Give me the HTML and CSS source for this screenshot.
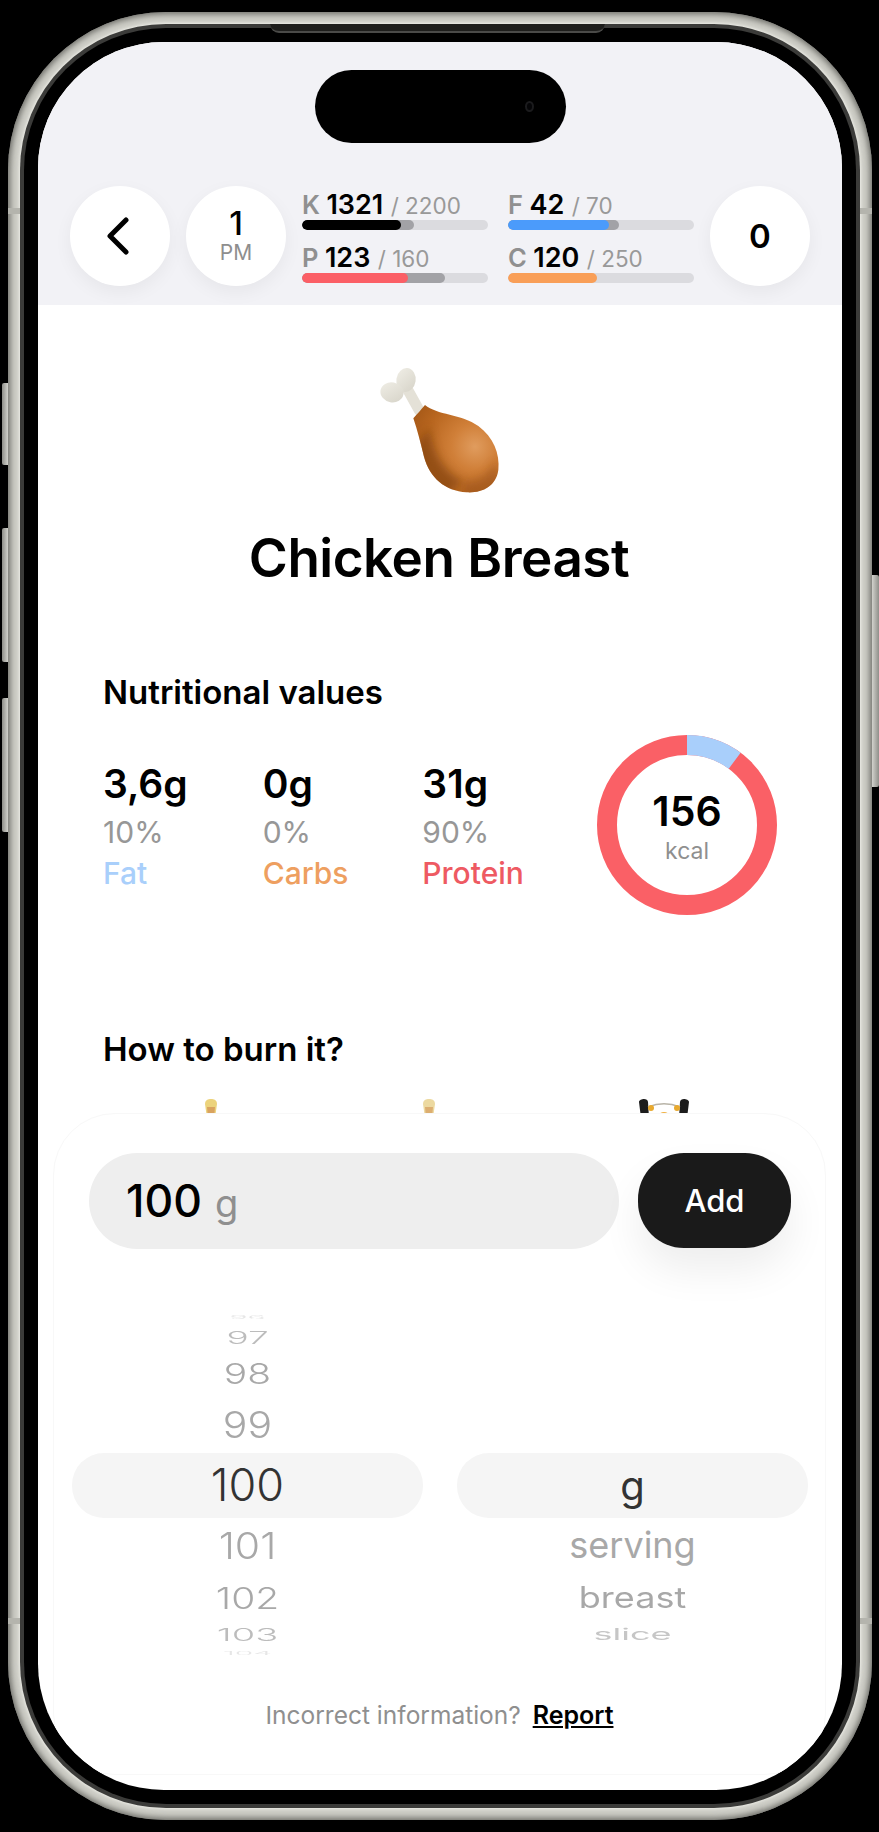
FILE: index.html
```html
<!DOCTYPE html>
<html lang="en">
<head>
<meta charset="utf-8">
<title>Chicken Breast</title>
<link rel="stylesheet" href="styles.css">
</head>
<body>
<div class="phone">
  <span class="side side-a"></span>
  <span class="side side-b"></span>
  <span class="side side-c"></span>
  <span class="side side-d"></span>
  <span class="band band-tl"></span>
  <span class="band band-tr"></span>
  <span class="band band-bl"></span>
  <span class="band band-br"></span>
  <span class="speaker"></span>
  <div class="ring">
    <div class="bezel">
      <div class="screen">
        <header class="top">
          <div class="island"><span class="camera"></span></div>
          <div class="top-row">
            <button class="round" aria-label="Back">
              <svg class="chevron" viewBox="0 0 24 38" width="24" height="38"><path d="M20 3 4 19l16 16" fill="none" stroke="#000" stroke-width="5" stroke-linecap="round" stroke-linejoin="round"/></svg>
            </button>
            <div class="round hour"><span class="hour-num">1</span><span class="hour-unit">PM</span></div>
            <div class="macros">
              <div class="macro">
                <div class="macro-text"><span class="letter">K</span> <span class="used">1321</span> <span class="goal">/ 2200</span></div>
                <div class="track"><span class="over over-k"></span><span class="fill fill-k"></span></div>
              </div>
              <div class="macro">
                <div class="macro-text"><span class="letter">F</span> <span class="used">42</span> <span class="goal">/ 70</span></div>
                <div class="track"><span class="over over-f"></span><span class="fill fill-f"></span></div>
              </div>
              <div class="macro">
                <div class="macro-text"><span class="letter">P</span> <span class="used">123</span> <span class="goal">/ 160</span></div>
                <div class="track"><span class="over over-p"></span><span class="fill fill-p"></span></div>
              </div>
              <div class="macro">
                <div class="macro-text"><span class="letter">C</span> <span class="used">120</span> <span class="goal">/ 250</span></div>
                <div class="track"><span class="fill fill-c"></span></div>
              </div>
            </div>
            <div class="round count">0</div>
          </div>
        </header>

        <main class="content">
          <svg class="drumstick" viewBox="0 0 600 510" width="200" height="170">
            <defs>
              <radialGradient id="meat" gradientUnits="userSpaceOnUse" cx="435" cy="320" r="200">
                <stop offset="0" stop-color="#e09c5e"/>
                <stop offset=".35" stop-color="#d07f38"/>
                <stop offset=".75" stop-color="#b8661f"/>
                <stop offset="1" stop-color="#a85a18"/>
              </radialGradient>
              <linearGradient id="bone" x1="0" y1="0" x2="1" y2="1">
                <stop offset="0" stop-color="#f0eee6"/>
                <stop offset="1" stop-color="#d6d3c8"/>
              </linearGradient>
              <filter id="soft" x="-30%" y="-30%" width="160%" height="160%"><feGaussianBlur stdDeviation="13"/></filter>
              <clipPath id="meatClip"><path d="M250 235C262 222 272 210 285 195 320 225 395 222 445 258 490 292 510 340 505 390 498 440 455 460 410 457 345 452 300 415 282 350 272 310 262 270 250 235Z"/></clipPath>
            </defs>
            <path d="M228 140 268 212" fill="none" stroke="#e4e1d7" stroke-width="32" stroke-linecap="round"/>
            <ellipse cx="228" cy="120" rx="29" ry="36" transform="rotate(8 228 120)" fill="url(#bone)"/>
            <ellipse cx="186" cy="157" rx="35" ry="30" transform="rotate(10 186 157)" fill="url(#bone)"/>
            <path d="M250 235C262 222 272 210 285 195 320 225 395 222 445 258 490 292 510 340 505 390 498 440 455 460 410 457 345 452 300 415 282 350 272 310 262 270 250 235Z" fill="url(#meat)"/>
            <g clip-path="url(#meatClip)">
              <path d="M300 260C305 330 335 390 400 425L340 470 240 340Z" fill="#7a3d10" opacity=".6" filter="url(#soft)"/>
              <path d="M400 425C450 425 480 400 495 360L520 470 400 480Z" fill="#8f4a14" opacity=".45" filter="url(#soft)"/>
            </g>
          </svg>
          <h1 class="title">Chicken Breast</h1>

          <h2 class="heading heading-values">Nutritional values</h2>
          <section class="values">
            <div class="value-col">
              <div class="amount">3,6g</div>
              <div class="percent">10%</div>
              <div class="label label-fat">Fat</div>
            </div>
            <div class="value-col">
              <div class="amount">0g</div>
              <div class="percent">0%</div>
              <div class="label label-carbs">Carbs</div>
            </div>
            <div class="value-col">
              <div class="amount">31g</div>
              <div class="percent">90%</div>
              <div class="label label-protein">Protein</div>
            </div>
            <div class="donut">
              <svg viewBox="0 0 180 180" width="180" height="180">
                <circle cx="90" cy="90" r="80" fill="none" stroke="#fa6066" stroke-width="20"/>
                <circle cx="90" cy="90" r="80" fill="none" stroke="#a9cffb" stroke-width="20" stroke-dasharray="51 452" transform="rotate(-90 90 90)"/>
              </svg>
              <div class="donut-text"><span class="kcal-num">156</span><span class="kcal-unit">kcal</span></div>
            </div>
          </section>

          <h2 class="heading heading-burn">How to burn it?</h2>
          <div class="burn">
            <svg class="burn-a" viewBox="0 0 20 20" width="20" height="20"><path d="M4 6c0-4 3-5 6-5s6 1 6 5l-2 14H6Z" fill="#ecd37c"/><path d="M6 9h8l-1 11H7Z" fill="#d9a35f"/></svg>
            <svg class="burn-b" viewBox="0 0 20 20" width="20" height="20"><path d="M4 6c0-4 3-5 6-5s6 1 6 5l-2 14H6Z" fill="#ecd9a0"/><path d="M6 9h8l-1 11H7Z" fill="#dcae70"/></svg>
            <svg class="burn-c" viewBox="0 0 52 20" width="52" height="20"><path d="M1 4c0-2 3-3 5-3s4 1 4 3l1 16H3Z" fill="#1c1c1c"/><path d="M51 4c0-2-3-3-5-3s-4 1-4 3l-1 16h8Z" fill="#1c1c1c"/><path d="M10 9c10-4 22-4 32 0" fill="none" stroke="#b9b4a8" stroke-width="1.5"/><circle cx="13" cy="10" r="3" fill="#e8a92e"/><circle cx="39" cy="10" r="3" fill="#e8a92e"/><ellipse cx="26" cy="17" rx="5" ry="3" fill="#f0b040"/></svg>
          </div>
        </main>

        <section class="sheet">
          <div class="entry">
            <div class="field"><span class="field-num">100</span> <span class="field-unit">g</span></div>
            <button class="add">Add</button>
          </div>
          <div class="picker">
            <div class="wheel">
              <div class="cell c-cap-top"><span class="num n-cap">96</span></div>
              <div class="cell c-97"><span class="num n-97">97</span></div>
              <div class="cell c-98"><span class="num n-98">98</span></div>
              <div class="cell c-99"><span class="num n-99">99</span></div>
              <div class="cell sel"><span class="num n-sel">100</span></div>
              <div class="cell c-101"><span class="num n-101">101</span></div>
              <div class="cell c-102"><span class="num n-102">102</span></div>
              <div class="cell c-103"><span class="num n-103">103</span></div>
              <div class="cell c-cap-bot"><span class="num n-cap">104</span></div>
            </div>
            <div class="wheel">
              <div class="cell c-blank"></div>
              <div class="cell sel"><span class="word w-sel">g</span></div>
              <div class="cell c-101"><span class="word w-serving">serving</span></div>
              <div class="cell c-102"><span class="word w-breast">breast</span></div>
              <div class="cell c-103"><span class="word w-slice">slice</span></div>
            </div>
          </div>
          <p class="report">Incorrect information? <a class="report-link" href="#">Report</a></p>
        </section>
      </div>
    </div>
  </div>
</div>
</body>
</html>
```

FILE: styles.css
```css
* { box-sizing: border-box; }
html, body { margin: 0; background: #000; }
body {
  width: 879px;
  height: 1832px;
  overflow: hidden;
  padding: 12px 7px 12px 8px;
  font-family: Inter, "Liberation Sans", sans-serif;
  color: #000;
}

/* device frame */
.phone {
  position: relative;
  width: 864px;
  height: 1808px;
  padding: 12px;
  border-radius: 158px;
  background: #cfcfc8;
  box-shadow: inset 0 0 6px 2px rgba(85, 85, 80, .85);
}
.ring {
  height: 100%;
  padding: 4px;
  border-radius: 146px;
  background: #3b3b39;
  box-shadow: 0 0 3px 1px #ecece6;
}
.bezel {
  height: 100%;
  padding: 14px;
  border-radius: 142px;
  background: #000;
}
.screen {
  position: relative;
  height: 100%;
  overflow: hidden;
  border-radius: 126px;
  background: #fff;
}
.side { position: absolute; background: linear-gradient(90deg, #8f8f89, #d2d2cc); }
.side-a { left: -6px; top: 371px; width: 6px; height: 82px; border-radius: 2px 0 0 2px; }
.side-b { left: -6px; top: 516px; width: 6px; height: 134px; border-radius: 2px 0 0 2px; }
.side-c { left: -6px; top: 686px; width: 6px; height: 134px; border-radius: 2px 0 0 2px; }
.side-d { right: -7px; top: 563px; width: 7px; height: 212px; border-radius: 0 2px 2px 0; background: linear-gradient(270deg, #8f8f89, #d2d2cc); }
.band { position: absolute; width: 12px; height: 6px; background: #b4b4ad; }
.band-tl { left: 0; top: 196px; }
.band-tr { right: 0; top: 196px; }
.band-bl { left: 0; top: 1606px; }
.band-br { right: 0; top: 1606px; }
.speaker {
  position: absolute;
  left: 262px;
  top: 12px;
  width: 335px;
  height: 9px;
  border-bottom: 2px solid #4a4a48;
  border-radius: 0 0 16px 16px;
  background: #1d1d1b;
  z-index: 1;
}

/* header */
.top {
  height: 263px;
  padding-top: 28px;
  background: #f2f2f6;
}
.island {
  position: relative;
  width: 251px;
  height: 73px;
  margin: 0 auto;
  border-radius: 37px;
  background: #000;
}
.camera {
  position: absolute;
  right: 32px;
  top: 31px;
  width: 9px;
  height: 11px;
  border-radius: 50%;
  border: 2px solid #1b1b1d;
  background: #050507;
}
.top-row {
  display: flex;
  gap: 16px;
  align-items: flex-start;
  margin-top: 43px;
  padding-left: 32px;
}
.round {
  display: flex;
  flex: none;
  flex-direction: column;
  align-items: center;
  justify-content: center;
  width: 100px;
  height: 100px;
  padding: 0;
  border: 0;
  border-radius: 50%;
  background: #fff;
  box-shadow: 0 6px 18px rgba(0, 0, 0, .05);
}
.chevron { margin-left: -4px; }
.hour-num { font-size: 33px; line-height: 26px; font-weight: 500; }
.hour-unit { margin-top: 7px; font-size: 21px; line-height: 20px; color: #8e8e8e; }
.count { font-size: 33px; font-weight: 600; }
.macros {
  display: grid;
  grid-template-columns: 186px 186px;
  gap: 17px 20px;
  margin-top: 8px;
}
.macro { height: 36px; }
.macro-text {
  height: 26px;
  margin-top: -2px;
  margin-bottom: 2px;
  font-size: 25.5px;
  line-height: 26px;
  font-weight: 600;
  white-space: nowrap;
}
.letter { color: #909090; }
.used { color: #000; font-size: 27px; }
.goal { margin-left: 1px; font-size: 22.5px; font-weight: 400; color: #999; }
.track { position: relative; height: 10px; border-radius: 5px; background: #dbdbdf; overflow: hidden; }
.fill, .over { position: absolute; left: 0; top: 0; height: 10px; border-radius: 5px; }
.over { background: #a2a2a6; }
.fill-k { width: 99px; background: #000; }
.over-k { width: 112px; }
.fill-f { width: 101px; background: #4b9bfb; }
.over-f { width: 111px; }
.fill-p { width: 106px; background: #fb5f66; }
.over-p { width: 143px; }
.fill-c { width: 89px; background: #f99f58; }

/* body */
.content { padding: 0 65px; }
.drumstick { display: block; margin: 35px 0 0 227px; }
.title {
  margin: 13px 0 0 -2px;
  font-size: 53px;
  line-height: 70px;
  font-weight: 600;
  text-align: center;
  letter-spacing: -.5px;
}
.heading { margin: 0; font-size: 33px; line-height: 40px; font-weight: 600; }
.heading-values { margin-top: 79px; }
.heading-burn { margin-top: 114px; }
.values {
  display: flex;
  height: 180px;
  margin-top: 23px;
}
.value-col { width: 160px; padding-top: 22px; }
.amount { height: 53px; font-size: 39px; line-height: 53px; font-weight: 600; }
.percent { height: 43px; margin-top: 1px; margin-bottom: -1px; font-size: 30px; line-height: 43px; color: #979797; }
.label { height: 38px; margin-top: 1px; font-size: 30px; line-height: 38px; font-weight: 500; }
.label-fat { color: #a9cffb; }
.label-carbs { color: #ee9f60; }
.label-protein { color: #ee5a62; }
.donut {
  display: grid;
  width: 180px;
  height: 180px;
  margin-left: 15px;
}
.donut svg, .donut-text { grid-area: 1 / 1; }
.donut-text {
  display: flex;
  flex-direction: column;
  align-items: center;
  justify-content: center;
  padding-top: 8px;
}
.kcal-num { font-size: 41px; line-height: 44px; font-weight: 600; }
.kcal-unit { font-size: 23px; line-height: 37px; color: #8f8f8f; }
.burn { display: flex; margin-top: 29px; }
.burn svg { display: block; flex: none; }
.burn-a { margin-left: 98px; }
.burn-b { margin-left: 198px; }
.burn-c { margin-left: 199px; }

/* bottom sheet */
.sheet {
  position: absolute;
  left: 15px;
  right: 16px;
  top: 1071px;
  bottom: 15px;
  padding-top: 39px;
  border: 1px solid #f8f8f8;
  border-radius: 62px;
  background: #fff;
}
.entry {
  display: flex;
  gap: 19px;
  padding: 0 34px 0 35px;
}
.field {
  display: flex;
  flex: 1;
  align-items: baseline;
  gap: 13px;
  height: 96px;
  padding-left: 37px;
  border-radius: 48px;
  background: #eee;
  line-height: 96px;
}
.field-num { font-size: 44.5px; font-weight: 500; }
.field-unit { font-size: 38px; color: #8f8f8f; }
.add {
  flex: none;
  width: 153px;
  height: 95px;
  border: 0;
  border-radius: 46px;
  background: #1a1a1a;
  color: #fff;
  font: 500 31px Inter, "Liberation Sans", sans-serif;
  box-shadow: 0 22px 40px rgba(0, 0, 0, .07);
}
.picker {
  display: grid;
  grid-template-columns: 351px 351px;
  gap: 34px;
  margin: 58px 0 0 18px;
}
.wheel { display: flex; flex-direction: column; align-items: center; }
.cell { display: flex; align-items: center; justify-content: center; width: 100%; flex: none; }
.c-cap-top { height: 20px; }
.c-97 { height: 20px; }
.c-98 { height: 52px; }
.c-99 { height: 50px; }
.sel { height: 65px; margin: 4px 0 3px; border-radius: 32px; background: #f5f5f5; }
.c-101 { height: 48px; }
.c-102 { height: 56px; }
.c-103 { height: 18px; }
.c-cap-bot { height: 20px; }
.c-blank { height: 142px; }
.num, .word { display: block; line-height: 1; color: #a8a8a8; }
.num { font-weight: 300; }
.n-cap { font-size: 30px; color: #e6e6e6; transform: scaleY(.14); }
.n-97 { font-size: 37px; color: #bcbcbc; transform: scaleY(.48); }
.n-98 { font-size: 39px; transform: scaleY(.74); }
.n-99 { font-size: 41px; transform: scaleY(.9); }
.n-sel { font-size: 45px; color: #333; margin-top: -3px; }
.n-101 { font-size: 41px; transform: scaleY(.9); }
.n-102 { font-size: 39px; transform: scaleY(.78); }
.n-103 { font-size: 38px; color: #bcbcbc; transform: scaleY(.47); }
.w-sel { font-size: 40px; color: #333; }
.w-serving { font-size: 36px; }
.w-breast { font-size: 36px; transform: scaleY(.82); }
.w-slice { font-size: 36px; color: #c6c6c6; transform: scaleY(.45); }
.report {
  margin: 32px 0 0;
  font-size: 24.5px;
  line-height: 40px;
  text-align: center;
  color: #8f8f8f;
}
.report-link { margin-left: 5px; color: #000; font-size: 25px; font-weight: 600; text-decoration: underline; }
```
